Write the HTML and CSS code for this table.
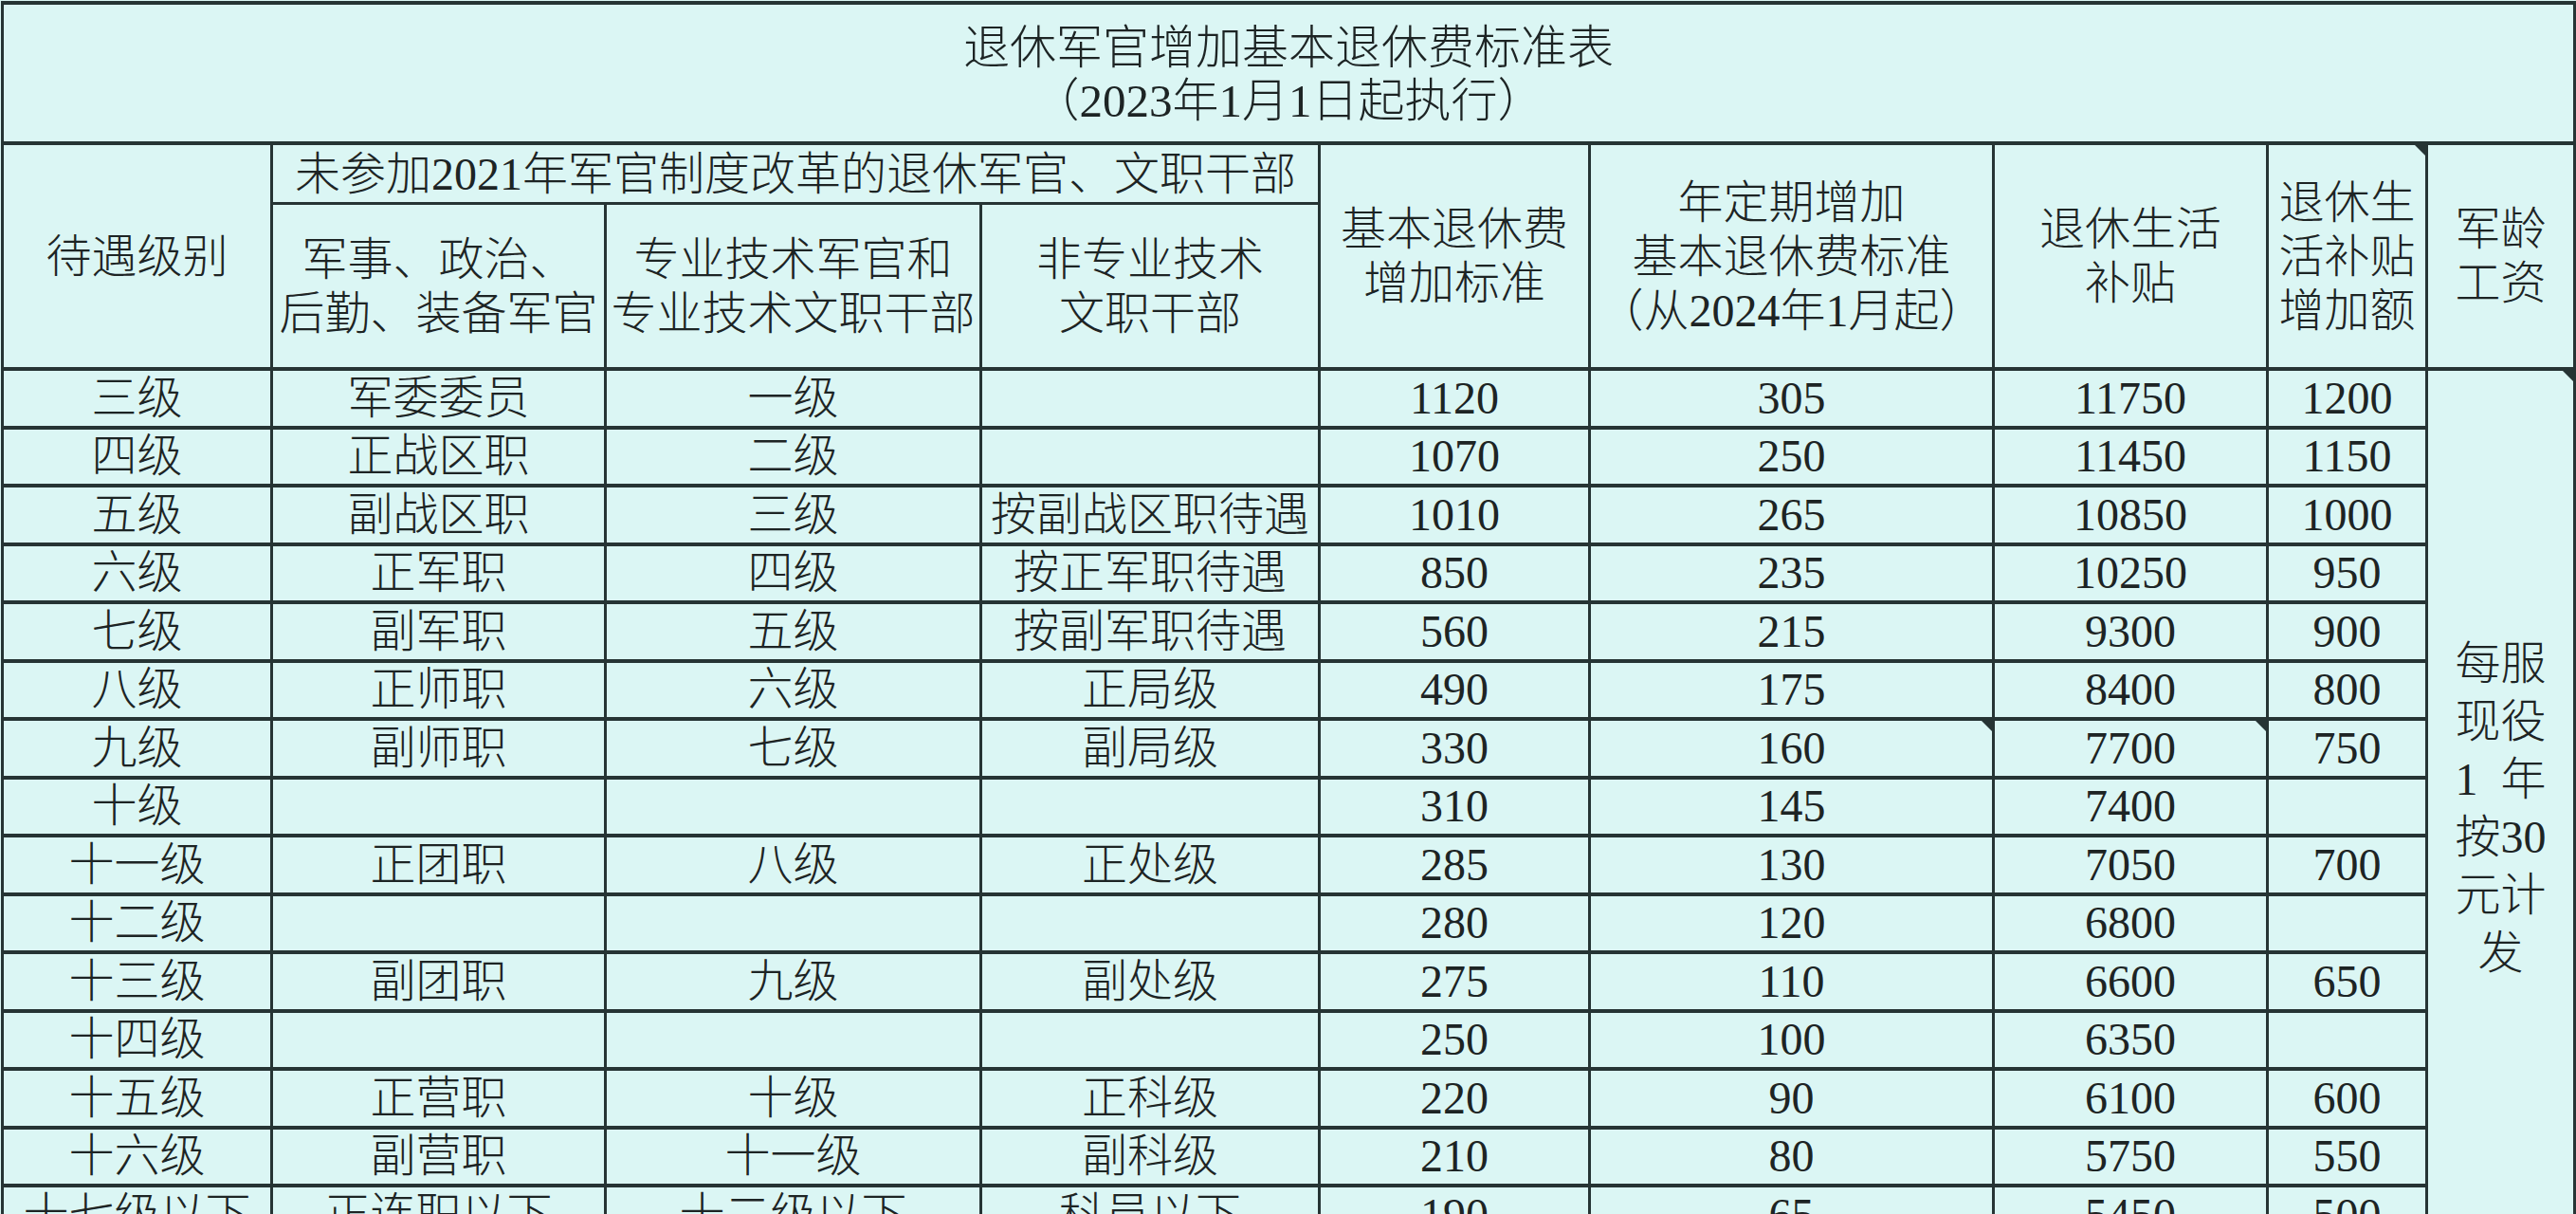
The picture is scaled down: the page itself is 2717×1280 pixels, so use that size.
FILE: index.html
```html
<!DOCTYPE html>
<html lang="zh-CN">
<head>
<meta charset="utf-8">
<title>退休军官增加基本退休费标准表</title>
<link rel="stylesheet" href="styles.css">
</head>
<body>
<table class="sheet">
  <colgroup>
    <col class="c1"><col class="c2"><col class="c3"><col class="c4"><col class="c5"><col class="c6"><col class="c7"><col class="c8"><col class="c9">
  </colgroup>
  <tr class="title-row">
    <td colspan="9" class="title">退休军官增加基本退休费标准表<br>（2023年1月1日起执行）</td>
  </tr>
  <tr class="head-a">
    <td rowspan="2">待遇级别</td>
    <td colspan="3" class="group">未参加2021年军官制度改革的退休军官、文职干部</td>
    <td rowspan="2">基本退休费<br>增加标准</td>
    <td rowspan="2">年定期增加<br>基本退休费标准<br>（从2024年1月起）</td>
    <td rowspan="2">退休生活<br>补贴</td>
    <td rowspan="2" class="note">退休生<br>活补贴<br>增加额</td>
    <td rowspan="2">军龄<br>工资</td>
  </tr>
  <tr class="head-b">
    <td>军事、政治、<br>后勤、装备军官</td>
    <td>专业技术军官和<br>专业技术文职干部</td>
    <td>非专业技术<br>文职干部</td>
  </tr>
  <tr class="row"><td>三级</td><td>军委委员</td><td>一级</td><td></td><td>1120</td><td>305</td><td>11750</td><td>1200</td>
    <td rowspan="15" class="tenure note">每服<br>现役<br>1&nbsp;&nbsp;年<br>按30<br>元计<br>发</td></tr>
  <tr class="row"><td>四级</td><td>正战区职</td><td>二级</td><td></td><td>1070</td><td>250</td><td>11450</td><td>1150</td></tr>
  <tr class="row"><td>五级</td><td>副战区职</td><td>三级</td><td>按副战区职待遇</td><td>1010</td><td>265</td><td>10850</td><td>1000</td></tr>
  <tr class="row"><td>六级</td><td>正军职</td><td>四级</td><td>按正军职待遇</td><td>850</td><td>235</td><td>10250</td><td>950</td></tr>
  <tr class="row"><td>七级</td><td>副军职</td><td>五级</td><td>按副军职待遇</td><td>560</td><td>215</td><td>9300</td><td>900</td></tr>
  <tr class="row"><td>八级</td><td>正师职</td><td>六级</td><td>正局级</td><td>490</td><td>175</td><td>8400</td><td>800</td></tr>
  <tr class="row"><td>九级</td><td>副师职</td><td>七级</td><td>副局级</td><td>330</td><td class="note">160</td><td class="note">7700</td><td>750</td></tr>
  <tr class="row"><td>十级</td><td></td><td></td><td></td><td>310</td><td>145</td><td>7400</td><td></td></tr>
  <tr class="row"><td>十一级</td><td>正团职</td><td>八级</td><td>正处级</td><td>285</td><td>130</td><td>7050</td><td>700</td></tr>
  <tr class="row"><td>十二级</td><td></td><td></td><td></td><td>280</td><td>120</td><td>6800</td><td></td></tr>
  <tr class="row"><td>十三级</td><td>副团职</td><td>九级</td><td>副处级</td><td>275</td><td>110</td><td>6600</td><td>650</td></tr>
  <tr class="row"><td>十四级</td><td></td><td></td><td></td><td>250</td><td>100</td><td>6350</td><td></td></tr>
  <tr class="row"><td>十五级</td><td>正营职</td><td>十级</td><td>正科级</td><td>220</td><td>90</td><td>6100</td><td>600</td></tr>
  <tr class="row"><td>十六级</td><td>副营职</td><td>十一级</td><td>副科级</td><td>210</td><td>80</td><td>5750</td><td>550</td></tr>
  <tr class="row"><td>十七级以下</td><td>正连职以下</td><td>十二级以下</td><td>科员以下</td><td>190</td><td>65</td><td>5450</td><td>500</td></tr>
</table>
</body>
</html>
```
FILE: styles.css
```css
html, body {
  margin: 0;
  padding: 0;
  overflow: hidden;
  background: #daf5f3;
}

body {
  font-family: "Liberation Serif", "Noto Sans CJK SC", serif;
  font-size: 48px;
  font-weight: 300;
  color: #1d2424;
}

.sheet {
  border-collapse: collapse;
  table-layout: fixed;
  width: 2713px;
  margin: 1px 0 0 1px;
  background: #dbf6f4;
}

.c1 { width: 284px; }
.c2 { width: 352px; }
.c3 { width: 396px; }
.c4 { width: 357px; }
.c5 { width: 285px; }
.c6 { width: 426px; }
.c7 { width: 289px; }
.c8 { width: 168px; }
.c9 { width: 156px; }

td {
  border: 3px solid #263434;
  padding: 0;
  text-align: center;
  vertical-align: middle;
  white-space: nowrap;
  line-height: 57px;
  position: relative;
}

.title-row td {
  height: 141px;
  border-top: 4px solid #263434;
  border-bottom-width: 4px;
  line-height: 56px;
  font-size: 49px;
  padding-top: 3px;
}

.head-a .group {
  height: 60px;
}

.head-b td {
  height: 171px;
}

.row td {
  height: 57.5px;
  line-height: 50px;
  border-top-width: 4px;
  border-bottom-width: 4px;
}

.row td.tenure {
  line-height: 61px;
  padding-top: 4px;
}

.note::after {
  content: "";
  position: absolute;
  top: 0;
  right: 0;
  width: 0;
  height: 0;
  border-top: 11px solid #263434;
  border-left: 11px solid transparent;
}
```
